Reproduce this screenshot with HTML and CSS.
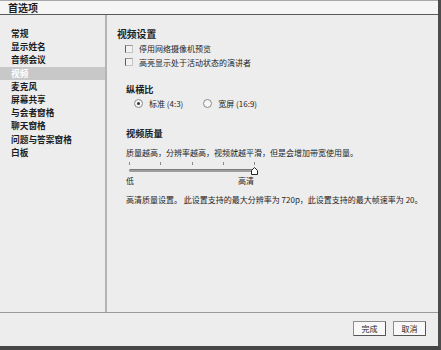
FILE: index.html
```html
<!DOCTYPE html>
<html lang="zh-CN">
<head>
<meta charset="utf-8">
<title>首选项</title>
<link rel="stylesheet" href="styles.css">
</head>
<body>
<div class="window">
  <div class="titlebar">首选项</div>
  <div class="main">
    <ul class="sidebar">
      <li>常规</li>
      <li>显示姓名</li>
      <li>音频会议</li>
      <li class="active">视频</li>
      <li>麦克风</li>
      <li>屏幕共享</li>
      <li>与会者窗格</li>
      <li>聊天窗格</li>
      <li>问题与答案窗格</li>
      <li>白板</li>
    </ul>
    <div class="content">
      <h2 class="title">视频设置</h2>
      <label class="check"><span class="box"></span>停用网络摄像机预览</label>
      <label class="check"><span class="box"></span>高亮显示处于活动状态的演讲者</label>

      <h3 class="section aspect">纵横比</h3>
      <div class="radios">
        <label class="radio"><span class="dot on"></span>标准 (4:3)</label>
        <label class="radio"><span class="dot"></span>宽屏 (16:9)</label>
      </div>

      <h3 class="section quality">视频质量</h3>
      <p class="desc">质量越高，分辨率越高，视频就越平滑，但是会增加带宽使用量。</p>
      <div class="slider">
        <div class="ticks"><i></i><i></i><i></i><i></i><i></i></div>
        <div class="track">
          <svg class="thumb" width="7" height="8" viewBox="0 0 7 8"><path d="M0.5 7.5 V3.5 L3.5 0.5 L6.5 3.5 V7.5 Z" fill="#fff" stroke="#222" stroke-width="1"/></svg>
        </div>
        <div class="labels"><span>低</span><span>高清</span></div>
      </div>
      <p class="desc note">高清质量设置。 此设置支持的最大分辨率为 720p，此设置支持的最大帧速率为 20。</p>
    </div>
  </div>
  <div class="footer">
    <button class="btn">完成</button>
    <button class="btn">取消</button>
  </div>
</div>
</body>
</html>
```

FILE: styles.css
```css
* { box-sizing: border-box; }
html, body { margin: 0; padding: 0; }
body {
  width: 441px;
  height: 350px;
  background: #ededed;
  font-family: "Noto Sans CJK SC", "Liberation Sans", sans-serif;
  color: #1e1e1e;
  overflow: hidden;
}
.window {
  width: 441px;
  height: 350px;
  display: flex;
  flex-direction: column;
  background: #ededed;
  border-right: 3px solid #4c4c4c;
  border-bottom: 4px solid #474747;
}
.titlebar {
  height: 15px;
  background: #f5f5f5;
  border-top: 1px solid #a8a8a8;
  border-bottom: 1px solid #5a5a5a;
  font-size: 10px;
  font-weight: bold;
  line-height: 13px;
  padding-left: 8px;
}
.main {
  flex: 1;
  display: flex;
  border-bottom: 1px solid #9a9a9a;
}
.sidebar {
  list-style: none;
  margin: 0;
  padding: 12px 0 0 0;
  width: 107px;
  border-right: 2px solid #b4b4b4;
}
.sidebar li {
  height: 13.2px;
  line-height: 13.2px;
  padding-left: 11px;
  font-size: 8.7px;
  font-weight: bold;
  white-space: nowrap;
}
.sidebar li.active {
  background: #c8c8c8;
  color: #fff;
}
.content {
  flex: 1;
  padding: 13px 0 0 10px;
}
.title {
  margin: 0 0 2px 0;
  font-size: 9.8px;
  font-weight: bold;
  line-height: 12px;
}
.check {
  display: flex;
  align-items: center;
  height: 13.5px;
  padding-left: 8px;
  font-size: 8px;
}
.box {
  width: 8px;
  height: 8px;
  background: #f2f2f2;
  border: 1px solid #c4c4c4;
  border-left-color: #5c5c5c;
  border-top-color: #9a9a9a;
  margin-right: 6px;
}
.section {
  margin: 0;
  padding-left: 9px;
  font-size: 9.2px;
  font-weight: bold;
  line-height: 12px;
}
.aspect { margin-top: 14px; }
.radios {
  display: flex;
  gap: 20px;
  padding-left: 17px;
  height: 14px;
  align-items: center;
  margin-top: 1px;
}
.radio {
  display: flex;
  align-items: center;
  font-size: 8px;
  font-family: "Noto Sans CJK SC", "Liberation Sans", sans-serif;
}
.dot {
  width: 9px;
  height: 9px;
  border-radius: 50%;
  border: 1px solid #8a8a8a;
  background: #f6f6f6;
  margin-right: 6px;
  display: flex;
  align-items: center;
  justify-content: center;
}
.dot.on::after {
  content: "";
  width: 3px;
  height: 3px;
  border-radius: 50%;
  background: #333;
}
.quality { margin-top: 17px; }
.desc {
  margin: 8px 0 0 0;
  padding-left: 9px;
  font-size: 8px;
  line-height: 11px;
}
.slider {
  margin: 4px 0 0 0;
  padding-left: 12px;
  width: 160px;
}
.ticks {
  display: flex;
  justify-content: space-between;
  width: 126px;
  height: 3px;
}
.ticks i {
  width: 1px;
  height: 3px;
  background: #8a8a8a;
}
.track {
  position: relative;
  margin-top: 4px;
  width: 125px;
  height: 3px;
  background: #9e9e9e;
  border-top: 1px solid #7a7a7a;
  border-radius: 2px 0 0 2px;
}
.thumb {
  position: absolute;
  right: -4px;
  top: -3px;
}
.labels {
  display: flex;
  justify-content: space-between;
  width: 128px;
  margin-left: -3px;
  margin-top: 4px;
  font-size: 8px;
  line-height: 10px;
}
.note { margin-top: 8px; }
.footer {
  height: 33px;
  display: flex;
  justify-content: flex-end;
  align-items: flex-start;
  gap: 7px;
  padding: 8px 12px 0 0;
}
.btn {
  width: 33px;
  height: 15px;
  padding: 0;
  margin: 0;
  font-family: "Noto Sans CJK SC", sans-serif;
  font-size: 8px;
  line-height: 12px;
  color: #1e1e1e;
  background: #f8f8f8;
  border: 1px solid #8c8c8c;
  border-right-color: #555;
  border-bottom-color: #555;
  border-radius: 1px;
}
```
